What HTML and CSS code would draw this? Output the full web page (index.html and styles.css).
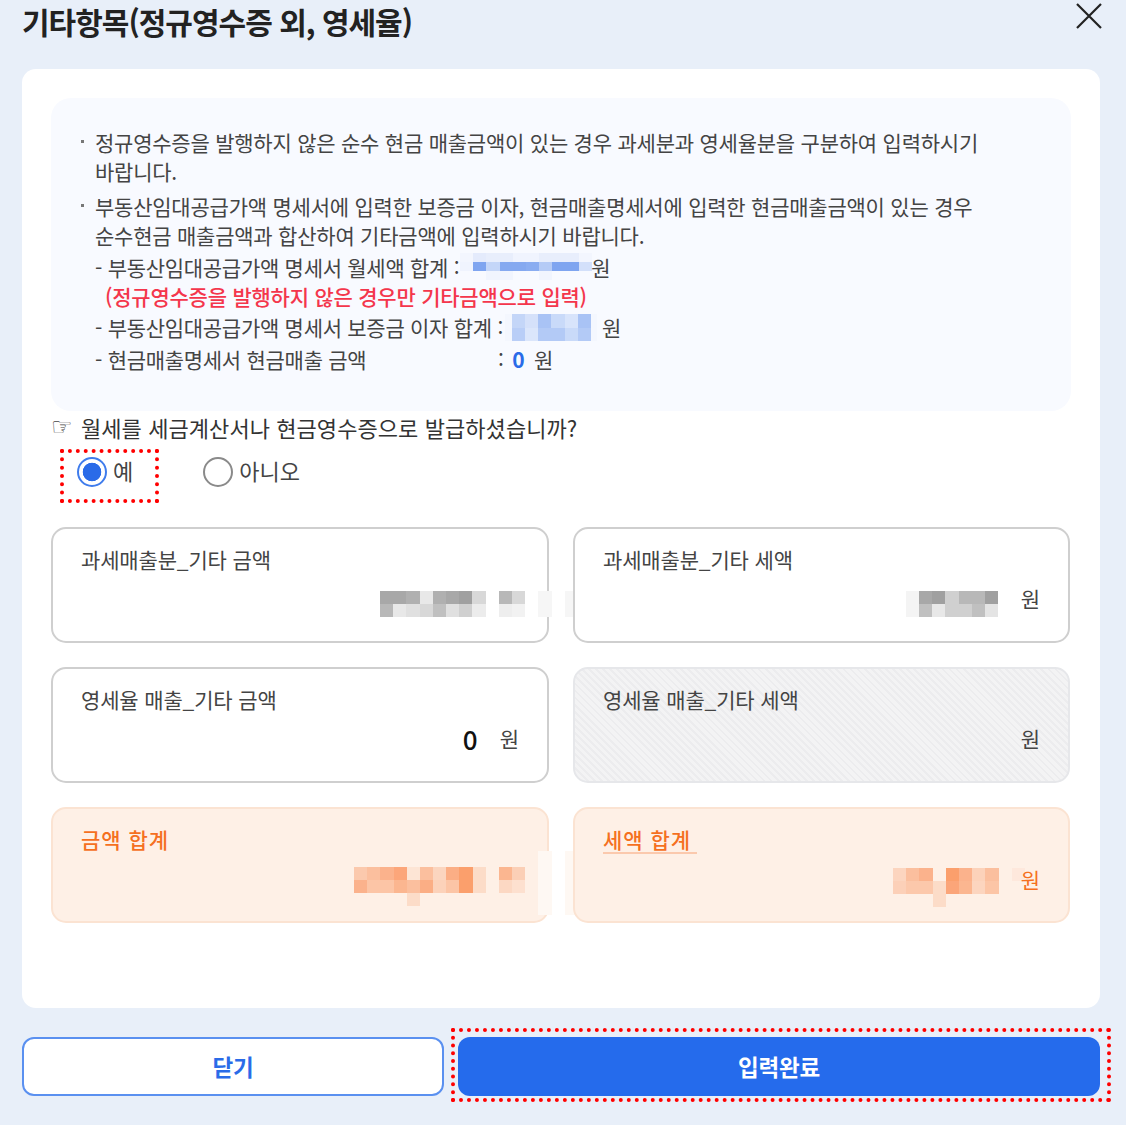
FILE: index.html
```html
<!DOCTYPE html>
<html lang="ko">
<head>
  <meta charset="UTF-8" />
  <title>기타항목</title>
  <link rel="stylesheet" href="styles.css">
</head>
<body>
  <header class="modal-head">
    <h1>기타항목(정규영수증 외, 영세율)</h1>
    <svg class="close" width="26" height="26" viewBox="0 0 26 26"><path d="M1 1 L25 25 M25 1 L1 25" /></svg>
  </header>

  <main class="panel">
    <section class="info">
      <p class="bullet">정규영수증을 발행하지 않은 순수 현금 매출금액이 있는 경우 과세분과 영세율분을 구분하여 입력하시기<br>바랍니다.</p>
      <p class="bullet second">부동산임대공급가액 명세서에 입력한 보증금 이자, 현금매출명세서에 입력한 현금매출금액이 있는 경우<br>순수현금 매출금액과 합산하여 기타금액에 입력하시기 바랍니다.</p>
      <div class="sub sub-rent">
        <span>- 부동산임대공급가액 명세서 월세액 합계 :</span>
        <svg class="mosaic m-rent" width="132" height="27" viewBox="0 0 10 3" preserveAspectRatio="none">
          <rect x="0" y="0" fill="#f3f6fe"/><rect x="1" y="0" fill="#e4ebfc"/><rect x="2" y="0" fill="#e8eefc"/><rect x="3" y="0" fill="#e8eefc"/><rect x="4" y="0" fill="#f0f4fe"/><rect x="5" y="0" fill="#f0f4fe"/><rect x="6" y="0" fill="#e8eefc"/><rect x="7" y="0" fill="#e8eefc"/><rect x="8" y="0" fill="#e8eefc"/><rect x="9" y="0" fill="#f3f6fe"/>
          <rect x="0" y="1" fill="#f0f4fe"/><rect x="1" y="1" fill="#7fa5f0"/><rect x="2" y="1" fill="#c4d6f8"/><rect x="3" y="1" fill="#85a9f0"/><rect x="4" y="1" fill="#85a9f0"/><rect x="5" y="1" fill="#8aadf1"/><rect x="6" y="1" fill="#b5cbf6"/><rect x="7" y="1" fill="#7fa5f0"/><rect x="8" y="1" fill="#7fa5f0"/><rect x="9" y="1" fill="#d3e0fa"/>
          <rect x="2" y="2" fill="#f1f5fe"/><rect x="3" y="2" fill="#f1f5fe"/><rect x="6" y="2" fill="#f1f5fe"/>
        </svg>
        <span>원</span>
      </div>
      <div class="sub warn">(정규영수증을 발행하지 않은 경우만 기타금액으로 입력)</div>
      <div class="sub sub-deposit">
        <span>- 부동산임대공급가액 명세서 보증금 이자 합계 :</span>
        <svg class="mosaic m-deposit" width="92" height="27" viewBox="-0.53 0 7 2" preserveAspectRatio="none">
          <rect x="0" y="0" fill="#c4d6f8"/><rect x="1" y="0" fill="#d5e1fa"/><rect x="2" y="0" fill="#a9c3f5"/><rect x="3" y="0" fill="#c9daf9"/><rect x="4" y="0" fill="#d8e4fb"/><rect x="5" y="0" fill="#a9c3f5"/>
          <rect x="0" y="1" fill="#b9cef7"/><rect x="1" y="1" fill="#dbe6fb"/><rect x="2" y="1" fill="#b3caf6"/><rect x="3" y="1" fill="#b3caf6"/><rect x="4" y="1" fill="#c9daf9"/><rect x="5" y="1" fill="#b3caf6"/>
        </svg>
        <span>원</span>
      </div>
      <div class="sub sub-cash">
        <span class="cash-label">- 현금매출명세서 현금매출 금액</span>
        <span>: <b class="zero">0</b> 원</span>
      </div>
    </section>

    <p class="question"><span class="hand">☞</span>월세를 세금계산서나 현금영수증으로 발급하셨습니까?</p>

    <div class="radios">
      <div class="radio checked"><span class="dot"></span>예</div>
      <div class="radio"><span class="dot"></span>아니오</div>
    </div>

    <div class="cards">
      <div class="card">
        <div class="label">과세매출분_기타 금액</div>
        <div class="value">
          <svg class="mosaic m-a" width="198" height="26" viewBox="0 0 15 2" preserveAspectRatio="none">
            <rect x="0" y="0" fill="#a8a8a8"/><rect x="1" y="0" fill="#a8a8a8"/><rect x="2" y="0" fill="#b0b0b0"/><rect x="3" y="0" fill="#e8e8e8"/><rect x="4" y="0" fill="#b0b0b0"/><rect x="5" y="0" fill="#a8a8a8"/><rect x="6" y="0" fill="#a0a0a0"/><rect x="7" y="0" fill="#d8d8d8"/><rect x="9" y="0" fill="#b8b8b8"/><rect x="10" y="0" fill="#d8d8d8"/><rect x="12" y="0" fill="#f6f6f6"/><rect x="14" y="0" fill="#f6f6f6"/>
            <rect x="0" y="1" fill="#b8b8b8"/><rect x="1" y="1" fill="#e8e8e8"/><rect x="2" y="1" fill="#e0e0e0"/><rect x="3" y="1" fill="#d8d8d8"/><rect x="4" y="1" fill="#c0c0c0"/><rect x="5" y="1" fill="#e0e0e0"/><rect x="6" y="1" fill="#d0d0d0"/><rect x="7" y="1" fill="#ececec"/><rect x="9" y="1" fill="#eeeeee"/><rect x="10" y="1" fill="#f2f2f2"/><rect x="12" y="1" fill="#f6f6f6"/><rect x="14" y="1" fill="#f6f6f6"/>
          </svg>
        </div>
      </div>
      <div class="card">
        <div class="label">과세매출분_기타 세액</div>
        <div class="value">
          <svg class="mosaic m-b" width="92" height="26" viewBox="0 0 7 2" preserveAspectRatio="none">
            <rect x="0" y="0" fill="#f4f4f4"/><rect x="1" y="0" fill="#a8a8a8"/><rect x="2" y="0" fill="#a0a0a0"/><rect x="3" y="0" fill="#d0d0d0"/><rect x="4" y="0" fill="#b8b8b8"/><rect x="5" y="0" fill="#b8b8b8"/><rect x="6" y="0" fill="#a0a0a0"/>
            <rect x="0" y="1" fill="#f4f4f4"/><rect x="1" y="1" fill="#c0c0c0"/><rect x="2" y="1" fill="#e8e8e8"/><rect x="3" y="1" fill="#d0d0d0"/><rect x="4" y="1" fill="#d0d0d0"/><rect x="5" y="1" fill="#c0c0c0"/><rect x="6" y="1" fill="#e4e4e4"/>
          </svg>
          <span class="won">원</span>
        </div>
      </div>
      <div class="card">
        <div class="label">영세율 매출_기타 금액</div>
        <div class="value"><b class="amount">0</b><span class="won">원</span></div>
      </div>
      <div class="card disabled">
        <div class="label">영세율 매출_기타 세액</div>
        <div class="value"><span class="won">원</span></div>
      </div>
      <div class="card total">
        <div class="label">금액 합계</div>
        <div class="value">
          <svg class="mosaic m-c" width="224" height="65" viewBox="0 -1.2 17 5" preserveAspectRatio="none">
            <rect x="0" y="0" fill="#fbc9ad"/><rect x="1" y="0" fill="#fbbf9e"/><rect x="2" y="0" fill="#fbb28c"/><rect x="3" y="0" fill="#fca67a"/><rect x="4" y="0" fill="#fde5d5"/><rect x="5" y="0" fill="#fbbf9e"/><rect x="6" y="0" fill="#fbd5bf"/><rect x="7" y="0" fill="#fbae85"/><rect x="8" y="0" fill="#fb9f6c"/><rect x="9" y="0" fill="#fcdcc8"/><rect x="11" y="0" fill="#fbb690"/><rect x="12" y="0" fill="#fbcfb6"/>
            <rect x="0" y="1" fill="#fbb28c"/><rect x="1" y="1" fill="#fcc5a6"/><rect x="2" y="1" fill="#fcc5a6"/><rect x="3" y="1" fill="#fbb690"/><rect x="4" y="1" fill="#fbbf9e"/><rect x="5" y="1" fill="#fbae85"/><rect x="6" y="1" fill="#fcd2ba"/><rect x="7" y="1" fill="#fcc5a6"/><rect x="8" y="1" fill="#fb9f6c"/><rect x="9" y="1" fill="#fcdcc8"/><rect x="11" y="1" fill="#fcd8c3"/><rect x="12" y="1" fill="#fde0cf"/>
            <rect x="4" y="2" fill="#fcdcc8"/>
            <rect class="tall" x="14" y="-1.2" fill="#fef8f3"/><rect class="tall" x="16" y="-1.2" fill="#fef8f3"/>
          </svg>
        </div>
      </div>
      <div class="card total">
        <div class="label"><span class="underlined">세액 합계</span></div>
        <div class="value">
          <svg class="mosaic m-d" width="132" height="39" viewBox="0 0 10 3" preserveAspectRatio="none">
            <rect x="0" y="0" fill="#fcd5bf"/><rect x="1" y="0" fill="#fbbf9e"/><rect x="2" y="0" fill="#fbb28c"/><rect x="3" y="0" fill="#fef0e6"/><rect x="4" y="0" fill="#fb9f6c"/><rect x="5" y="0" fill="#fbb28c"/><rect x="6" y="0" fill="#fcd2ba"/><rect x="7" y="0" fill="#fbbf9e"/><rect x="9" y="0" fill="#fee8dc"/>
            <rect x="0" y="1" fill="#fcd0b8"/><rect x="1" y="1" fill="#fcc8ab"/><rect x="2" y="1" fill="#fcc8ab"/><rect x="3" y="1" fill="#fcdcc8"/><rect x="4" y="1" fill="#fba579"/><rect x="5" y="1" fill="#fbb690"/><rect x="6" y="1" fill="#fcd5bf"/><rect x="7" y="1" fill="#fcc5a6"/><rect x="9" y="1" fill="#fef0e6"/>
            <rect x="3" y="2" fill="#fcdcc8"/>
          </svg>
          <span class="won">원</span>
        </div>
      </div>
    </div>
  </main>

  <footer class="actions">
    <button class="btn btn-close">닫기</button>
    <button class="btn btn-done">입력완료</button>
  </footer>
</body>
</html>
```

FILE: styles.css
```css
* {
  box-sizing: border-box;
}
body {
  margin: 0;
  height: 1125px;
  padding: 0 26px 0 22px;
  background: #e8eff9;
  font-family: "Noto Sans CJK KR", "Noto Sans", sans-serif;
  color: #444;
  overflow: hidden;
}
p {
  margin: 0;
}
.modal-head {
  height: 69px;
  display: flex;
  justify-content: space-between;
  align-items: flex-start;
}
.modal-head h1 {
  margin: 0;
  font-size: 30px;
  line-height: 43px;
  font-weight: 700;
  letter-spacing: -1px;
  color: #222;
}
.close {
  margin: 3px -2px 0 0;
  flex: none;
}
.close path {
  stroke: #222;
  stroke-width: 2.2;
  fill: none;
}
.panel {
  height: 939px;
  padding: 29px;
  width: 1078px;
  background: #fff;
  border-radius: 14px;
}
.info {
  height: 313px;
  padding: 30px 30px 0 44px;
  background: #f8faff;
  border-radius: 20px;
  font-size: 21px;
  line-height: 29px;
  letter-spacing: -0.23px;
  white-space: nowrap;
}
.bullet {
  position: relative;
}
.bullet::before {
  content: '';
  position: absolute;
  left: -14px;
  top: 12px;
  width: 3px;
  height: 3px;
  background: #777;
}
.bullet.second {
  margin-top: 6px;
}
.sub {
  display: flex;
  align-items: center;
  height: 29px;
  letter-spacing: -0.28px;
}
.sub-rent {
  margin-top: 3px;
}
.m-rent {
  margin: -2px -1px 0 1px;
}
.warn {
  padding-left: 10px;
  color: #f4364c;
  font-weight: 500;
  letter-spacing: -0.23px;
}
.sub-deposit {
  margin-top: 2px;
}
.m-deposit {
  margin: 0 5px 0 2px;
  background: #f4f7fe;
}
.sub-cash {
  margin-top: 3px;
}
.cash-label {
  width: 403px;
}
.zero {
  margin: 0 4px 0 3px;
  color: #2a6be8;
  font-weight: 700;
}
.question {
  margin-top: 1px;
  height: 30px;
  display: flex;
  align-items: center;
  font-size: 22px;
  letter-spacing: 0.07px;
  color: #333;
}
.hand {
  width: 30px;
  font-family: "DejaVu Sans", sans-serif;
  font-size: 24px;
  color: #444;
}
.radios {
  display: flex;
  align-items: center;
  height: 54px;
  margin-top: 3px;
  padding-left: 26px;
  gap: 70px;
}
.radio {
  display: flex;
  align-items: flex-start;
  gap: 6px;
  position: relative;
  height: 30px;
  font-size: 22px;
  line-height: 27px;
  color: #444;
}
.radio .dot {
  width: 30px;
  height: 30px;
  border-radius: 50%;
  border: 2px solid #8a8a8a;
  background: #fff;
}
.radio.checked .dot {
  border-color: #3f7cec;
  background: radial-gradient(circle, #2a6be8 0 9px, #fff 9.6px);
}
.radio.checked::after {
  content: '';
  position: absolute;
  left: -17px;
  right: -26px;
  top: -8px;
  height: 46px;
  border: 4px dotted #f00;
}
.cards {
  display: grid;
  grid-template-columns: 498px 497px;
  grid-auto-rows: 116px;
  gap: 24px;
  margin-top: 28px;
}
.card {
  min-width: 0;
  padding: 16px 28px 0 28px;
  border: 2px solid #cfcfcf;
  border-radius: 15px;
  background: #fff;
}
.label {
  font-size: 21px;
  line-height: 28px;
  letter-spacing: -0.15px;
}
.value {
  display: flex;
  justify-content: flex-end;
  align-items: flex-start;
  height: 26px;
  margin-top: 12px;
}
.won {
  font-size: 21px;
  line-height: 26px;
  color: #444;
}
.amount {
  margin: 1px 22px 0 0;
  font-size: 26px;
  line-height: 26px;
  font-weight: 500;
  color: #111;
}
.disabled {
  border-color: #e6e7ea;
  background: repeating-linear-gradient(45deg, #f3f3f4 0 3px, #ececee 3px 5px);
}
.total {
  border-color: #fbe3d2;
  background: #fef0e6;
}
.total .label, .total .won {
  color: #f5701f;
}
.total .label {
  font-weight: 500;
  letter-spacing: 1px;
}
.underlined {
  display: inline-block;
  padding-right: 6px;
  line-height: 26px;
  border-bottom: 2px solid #fbc9ad;
}
.mosaic {
  flex: none;
  overflow: visible;
  shape-rendering: crispEdges;
}
.mosaic rect {
  width: 1px;
  height: 1px;
}
.mosaic rect.tall {
  height: 4.9px;
}
.m-a {
  margin: 6px -59px 0 0;
}
.m-b {
  margin: 6px 23px 0 0;
}
.m-c {
  margin: -14px -59px 0 0;
}
.m-d {
  margin: 2px -4px 0 0;
}
.actions {
  display: flex;
  gap: 14px;
  width: 1078px;
  margin-top: 29px;
}
.btn {
  height: 59px;
  padding: 0 0 2px;
  border-radius: 12px;
  font-family: inherit;
  font-size: 22.5px;
  font-weight: 700;
  letter-spacing: -0.2px;
}
.btn-close {
  width: 422px;
  background: #fff;
  color: #2a6be8;
  border: 2px solid #5a90f0;
}
.btn-done {
  flex: 1;
  position: relative;
  background: #256bec;
  color: #fff;
  border: none;
}
.btn-done::after {
  content: '';
  position: absolute;
  left: -7px;
  right: -11px;
  top: -9px;
  bottom: -6px;
  border: 4px dotted #f00;
}
```
